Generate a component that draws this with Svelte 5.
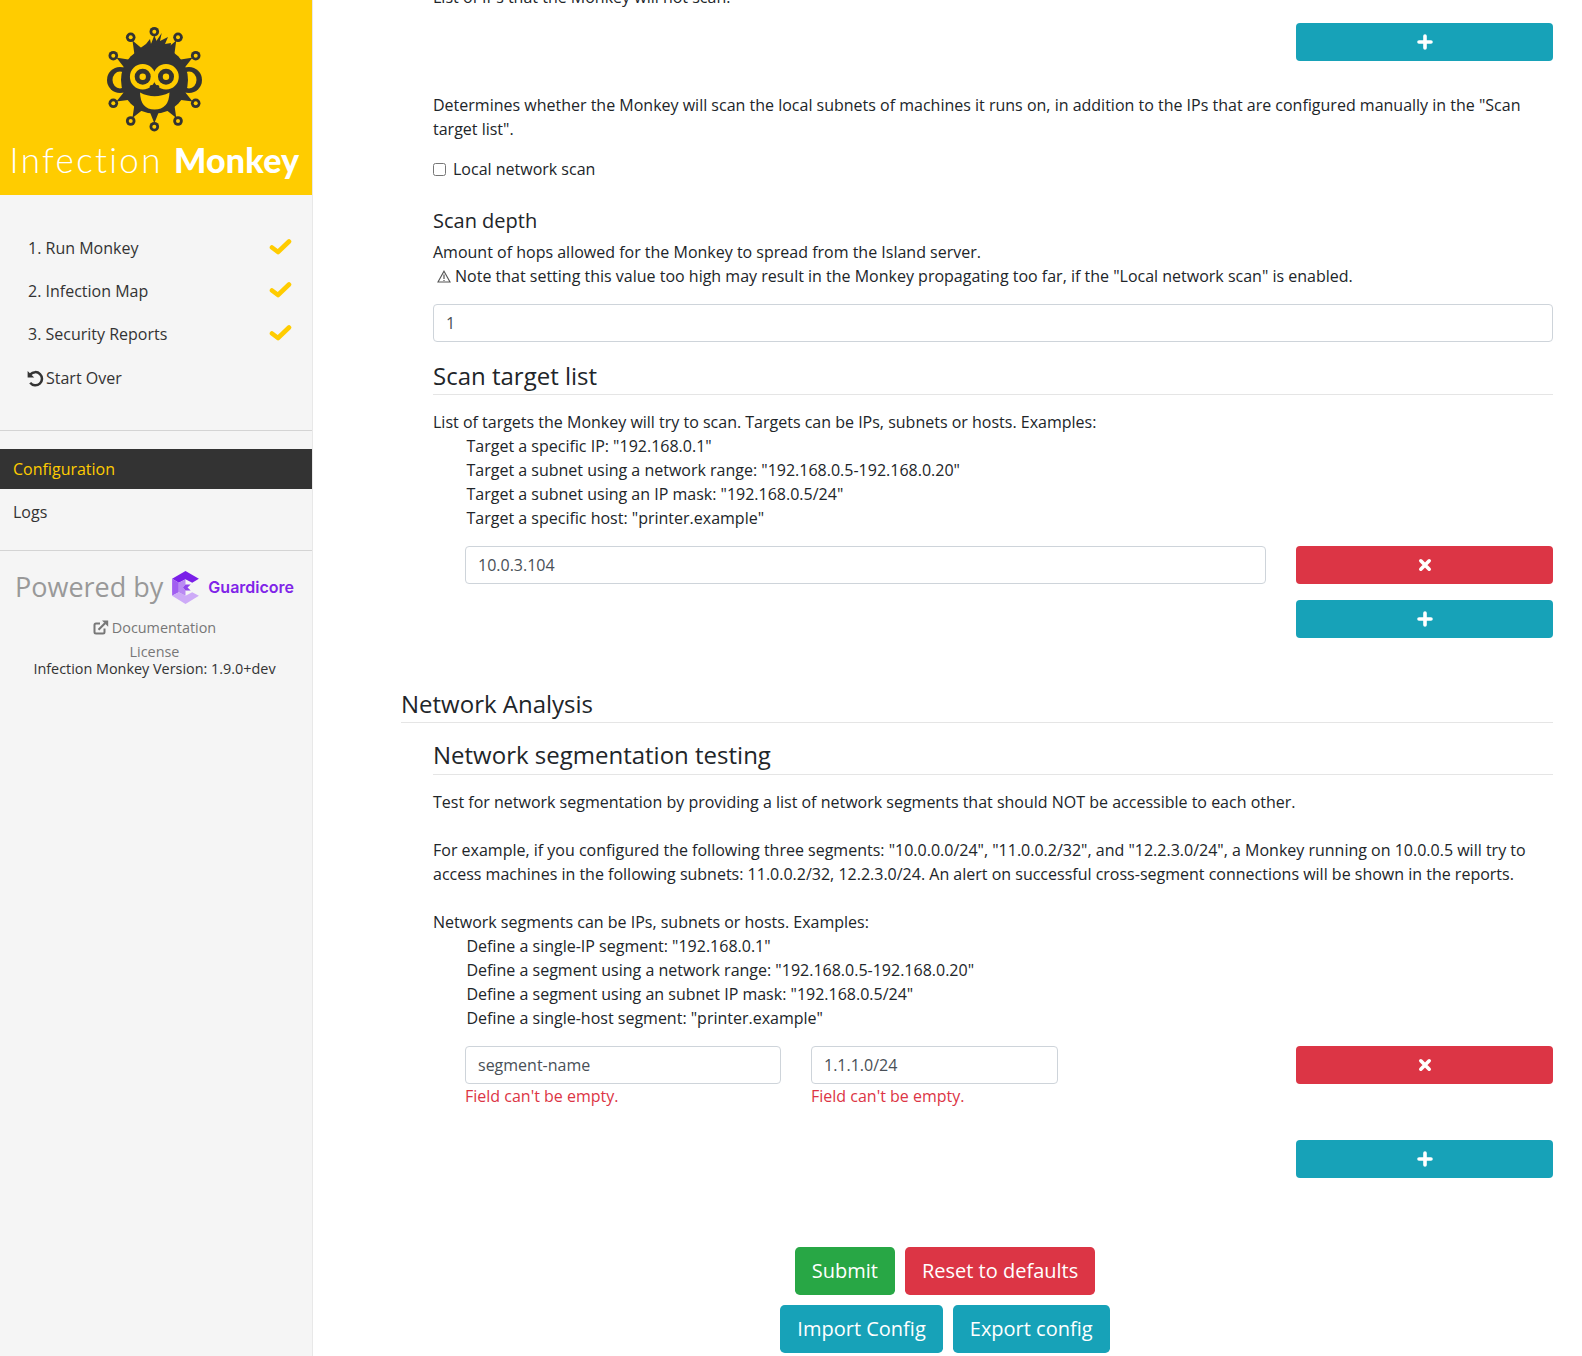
<script lang="ts">
	const steps = ['1. Run Monkey', '2. Infection Map', '3. Security Reports'];

	// end points of the virus spikes on the logo
	const spikes = [
		[154.3, 31.7], [130.7, 37.3], [178, 37.3], [113.3, 55.7], [195.7, 55.7],
		[113.3, 103.3], [195.7, 103.3], [130.7, 121], [178, 121], [154.3, 126.7]
	];
	const cx = 154.5;
	const cy = 80;

	function taper(x: number, y: number) {
		const dx = x - cx;
		const dy = y - cy;
		const len = Math.hypot(dx, dy);
		const nx = -dy / len;
		const ny = dx / len;
		const bx = cx + dx * 0.66;
		const by = cy + dy * 0.66;
		const w = 5;
		return `${bx + nx * w},${by + ny * w} ${x - nx * 1.4},${y - ny * 1.4} ${x + nx * 1.4},${y + ny * 1.4} ${bx - nx * w},${by - ny * w}`;
	}

	const targetExamples = [
		'Target a specific IP: "192.168.0.1"',
		'Target a subnet using a network range: "192.168.0.5-192.168.0.20"',
		'Target a subnet using an IP mask: "192.168.0.5/24"',
		'Target a specific host: "printer.example"'
	];
	const segmentExamples = [
		'Define a single-IP segment: "192.168.0.1"',
		'Define a segment using a network range: "192.168.0.5-192.168.0.20"',
		'Define a segment using an subnet IP mask: "192.168.0.5/24"',
		'Define a single-host segment: "printer.example"'
	];
</script>

{#snippet plus()}
	<svg class="glyph" width="16" height="16" viewBox="0 0 16 16"><path d="M8 2v12M2 8h12" stroke="#fff" stroke-width="3.6" stroke-linecap="round" /></svg>
{/snippet}

{#snippet times()}
	<svg class="glyph" width="16" height="16" viewBox="0 0 16 16"><path d="M3.8 3.8l8.4 8.4M12.2 3.8l-8.4 8.4" stroke="#fff" stroke-width="3.6" stroke-linecap="round" /></svg>
{/snippet}

<div class="app">
	<aside>
		<div class="logo">
			<svg class="monkey" width="110" height="120" viewBox="100 20 110 120">
				{#each spikes as s}
					<polygon points={taper(s[0], s[1])} fill="#333" />
					<circle cx={s[0]} cy={s[1]} r="4.8" fill="#333" />
					<circle cx={s[0]} cy={s[1]} r="2" fill="#fc0" />
				{/each}
				<circle cx="120" cy="80" r="13" fill="#333" />
				<circle cx="189" cy="80" r="13" fill="#333" />
				<ellipse cx="120" cy="80" rx="7.5" ry="8.5" fill="#fc0" />
				<ellipse cx="189" cy="80" rx="7.5" ry="8.5" fill="#fc0" />
				<polygon points="139,49 146,44 150,39 151,44 155,43 161.7,33 160,41 168,37 165,44 171,43 170,52" fill="#333" />
				<circle cx="154.5" cy="80" r="33.5" fill="#333" />
				<circle cx="142.7" cy="76.7" r="12.8" fill="#fc0" />
				<circle cx="166" cy="76.7" r="12.8" fill="#fc0" />
				<circle cx="142.7" cy="76.7" r="8" fill="#333" />
				<circle cx="166" cy="76.7" r="8" fill="#333" />
				<circle cx="142.7" cy="76.7" r="3.2" fill="#fc0" />
				<circle cx="166" cy="76.7" r="3.2" fill="#fc0" />
				<circle cx="151.7" cy="87" r="2.1" fill="#333" />
				<circle cx="157.3" cy="87" r="2.1" fill="#333" />
				<path d="M140 92.5Q154.5 100 169.5 92.5Q169 109.5 154.5 109.5Q140.5 109.5 140 92.5Z" fill="#fc0" />
			</svg>
			<div class="wordmark"><span class="thin">Infection</span> <span class="heavy">Monkey</span></div>
		</div>

		<ul class="steps">
			{#each steps as step}
				<li>
					<span>{step}</span>
					<svg width="24" height="18" viewBox="0 0 24 18"><polyline points="4,8.5 10,13 21,2.5" fill="none" stroke="#fc0" stroke-width="4.6" stroke-linejoin="round" stroke-linecap="round" /></svg>
				</li>
			{/each}
			<li class="over">
				<svg width="17" height="17" viewBox="0 0 17 17">
					<path d="M3.4 4.4A6.6 6.6 0 1 1 3.2 12.8" fill="none" stroke="#333" stroke-width="2.5" />
					<path d="M.6 1V7.6H7.2Z" fill="#333" />
				</svg>
				<span>Start Over</span>
			</li>
		</ul>

		<hr class="rule" />
		<div class="item active">Configuration</div>
		<div class="item">Logs</div>
		<hr class="rule second" />

		<div class="powered">
			<span class="by">Powered by</span>
			<svg width="29" height="33" viewBox="0 0 28 32">
				<polygon points="14,0 27,7.5 20.5,11.5 14,8 7.5,11.5 1,7.5" fill="#7a1fe8" />
				<polygon points="1,7.5 7.5,11.5 7.5,20.5 1,24" fill="#a15ff0" />
				<polygon points="1,24 7.5,20.5 14,24 20.5,20.5 27,24 14,32" fill="#cdaaf7" />
				<polygon points="7.5,11.5 14,8 14,13 11.5,16 14,19 14,24 7.5,20.5" fill="#b98af3" />
				<polygon points="14,13 19,13 16,16 19,19 14,19 11.5,16" fill="#8f45ec" />
			</svg>
			<span class="gc">Guardicore</span>
		</div>
		<div class="foot">
			<div class="doc">
				<svg width="16" height="15" viewBox="0 0 16 15">
					<path d="M11.5 8.5V12a1.5 1.5 0 0 1-1.5 1.5H3A1.5 1.5 0 0 1 1.5 12V5A1.5 1.5 0 0 1 3 3.5h4" fill="none" stroke="#777" stroke-width="2" />
					<path d="M5.5 9.8L12 3.3" stroke="#777" stroke-width="2.2" />
					<path d="M9 .6h6.2v6.2Z" fill="#777" />
				</svg>
				<span>Documentation</span>
			</div>
			<div class="license">License</div>
			<div class="version">Infection Monkey Version: 1.9.0+dev</div>
		</div>
	</aside>

	<main>
		<div class="form">
			<div class="group">
				<p>List of IPs that the Monkey will not scan.</p>
				<div class="add-row top"><button class="wide info">{@render plus()}</button></div>

				<p class="local">Determines whether the Monkey will scan the local subnets of machines it runs on, in addition to the IPs that are configured manually in the "Scan target list".</p>
				<label class="check"><input type="checkbox" /> <span>Local network scan</span></label>

				<h5>Scan depth</h5>
				<p>Amount of hops allowed for the Monkey to spread from the Island server.</p>
				<p class="note">
					<svg width="14" height="13" viewBox="0 0 14 13"><path d="M7 1.2L13 12H1Z" fill="none" stroke="#555" stroke-width="1.1" /><path d="M7 4.5V9M7 10v1" stroke="#555" stroke-width="1.2" /></svg>
					<span>Note that setting this value too high may result in the Monkey propagating too far, if the "Local network scan" is enabled.</span>
				</p>
				<input class="field depth" type="text" value="1" />

				<h4>Scan target list</h4>
				<p>List of targets the Monkey will try to scan. Targets can be IPs, subnets or hosts. Examples:</p>
				<div class="examples">
					{#each targetExamples as line}<div>{line}</div>{/each}
				</div>

				<div class="row">
					<div class="cells"><input class="field grow" type="text" value="10.0.3.104" /></div>
					<button class="wide danger">{@render times()}</button>
				</div>
				<div class="add-row gap16"><button class="wide info">{@render plus()}</button></div>
			</div>

			<h3>Network Analysis</h3>
			<div class="group">
				<h4 class="seg">Network segmentation testing</h4>
				<p>Test for network segmentation by providing a list of network segments that should NOT be accessible to each other.</p>
				<p class="spaced">For example, if you configured the following three segments: "10.0.0.0/24", "11.0.0.2/32", and "12.2.3.0/24", a Monkey running on 10.0.0.5 will try to access machines in the following subnets: 11.0.0.2/32, 12.2.3.0/24. An alert on successful cross-segment connections will be shown in the reports.</p>
				<p class="spaced">Network segments can be IPs, subnets or hosts. Examples:</p>
				<div class="examples">
					{#each segmentExamples as line}<div>{line}</div>{/each}
				</div>

				<div class="row">
					<div class="cells">
						<div class="cell first">
							<input class="field" type="text" value="segment-name" />
							<div class="error">Field can't be empty.</div>
						</div>
						<div class="cell second-cell">
							<input class="field" type="text" value="1.1.1.0/24" />
							<div class="error">Field can't be empty.</div>
						</div>
					</div>
					<button class="wide danger">{@render times()}</button>
				</div>
				<div class="add-row gap-seg"><button class="wide info">{@render plus()}</button></div>
			</div>
		</div>

		<div class="actions">
			<div><button class="lg success">Submit</button><button class="lg danger">Reset to defaults</button></div>
			<div><button class="lg info">Import Config</button><button class="lg info">Export config</button></div>
		</div>
	</main>
</div>

<style>
	:global(body) {
		margin: 0;
		background: #fff;
		overflow: hidden;
	}

	.app {
		display: flex;
		height: 1356px;
		overflow: hidden;
		font-family: "Open Sans", sans-serif;
		font-size: 16px;
		line-height: 24px;
		color: #212529;
	}

	aside {
		width: 313px;
		flex: none;
		box-sizing: border-box;
		background: #f5f5f5;
		border-right: 1px solid #e8e8e8;
	}

	.logo {
		height: 195px;
		background: #fc0;
		overflow: hidden;
		text-align: center;
	}

	.monkey {
		display: block;
		margin: 20px 0 0 100px;
	}

	.wordmark {
		margin-top: -3px;
		padding-right: 3px;
		font-family: Lato, sans-serif;
		font-size: 35px;
		line-height: 44px;
		color: #fff;
		white-space: nowrap;
		letter-spacing: 2.3px;
	}

	.thin {
		font-weight: 300;
	}

	.heavy {
		font-size: 34px;
		font-weight: 900;
		letter-spacing: 0.2px;
	}

	.steps {
		list-style: none;
		margin: 0;
		padding: 41px 20px 0 28px;
	}

	.steps li {
		display: flex;
		justify-content: space-between;
		align-items: center;
		height: 24px;
		margin-bottom: 19px;
		color: #333;
	}

	.steps li.over {
		justify-content: flex-start;
		margin-top: 20px;
	}

	.over svg {
		flex: none;
		margin: 0 2px 0 -1px;
	}

	.rule {
		margin: 40px 0 18px;
		border: 0;
		border-top: 1px solid #d4d4d4;
	}

	.rule.second {
		margin: 18px 0 0;
	}

	.item {
		height: 40px;
		padding: 0 13px;
		line-height: 40px;
		color: #333;
		margin-bottom: 3px;
	}

	.item.active {
		background: #333;
		color: #fc0;
	}

	.powered {
		display: flex;
		align-items: center;
		height: 34px;
		margin-top: 19px;
		padding-left: 15px;
	}

	.by {
		font-size: 27px;
		line-height: 34px;
		color: #999;
		margin-right: 8px;
		white-space: nowrap;
	}

	.gc {
		font-family: Inter, sans-serif;
		font-weight: 600;
		font-size: 16px;
		color: #8024e8;
		margin-left: 8px;
		white-space: nowrap;
	}

	.foot {
		text-align: center;
		font-size: 14.4px;
		line-height: 17px;
		color: #777;
		padding: 0 3px 0 0;
		margin-top: 14px;
	}

	.doc {
		display: flex;
		justify-content: center;
		align-items: center;
		gap: 3px;
		height: 18px;
	}

	.license {
		margin-top: 7px;
	}

	.version {
		color: #333;
	}

	main {
		flex: 1;
		min-width: 0;
		padding: 0 29px 0 24px;
	}

	.form {
		margin-top: -15px;
		padding-left: 64px;
	}

	.group {
		padding-left: 32px;
	}

	p {
		margin: 0;
	}

	.add-row {
		display: flex;
		justify-content: flex-end;
	}

	.add-row.top {
		margin-top: 14px;
	}

	.gap16 {
		margin-top: 16px;
	}

	.gap-seg {
		margin-top: 32px;
	}

	button {
		border: 1px solid transparent;
		border-radius: 4px;
		font-family: inherit;
		color: #fff;
		padding: 0;
	}

	.wide {
		display: flex;
		align-items: center;
		justify-content: center;
		flex: none;
		width: 257px;
		height: 38px;
	}

	.info {
		background: #17a2b8;
	}

	.danger {
		background: #dc3545;
	}

	.success {
		background: #28a745;
	}

	.glyph {
		display: block;
	}

	.local {
		margin-top: 32px;
	}

	.check {
		display: flex;
		align-items: center;
		gap: 7px;
		margin-top: 16px;
	}

	.check input {
		width: 13px;
		height: 13px;
		margin: 0;
	}

	h5 {
		margin: 28px 0 7px;
		font-size: 20px;
		font-weight: 400;
		line-height: 24px;
	}

	.note {
		display: flex;
		align-items: center;
		gap: 4px;
		padding-left: 4px;
	}

	.field {
		display: block;
		box-sizing: border-box;
		width: 100%;
		height: 38px;
		padding: 6px 12px;
		border: 1px solid #ced4da;
		border-radius: 4px;
		background: #fff;
		color: #495057;
		font-family: inherit;
		font-size: 16px;
		line-height: 24px;
	}

	.depth {
		margin-top: 16px;
	}

	h4 {
		margin: 19px 0 15px;
		padding-bottom: 4px;
		border-bottom: 1px solid #e5e5e5;
		font-size: 24px;
		font-weight: 400;
		line-height: 29px;
	}

	h4.seg {
		margin-top: 17px;
		padding-bottom: 5px;
	}

	h3 {
		margin: 51px 0 0;
		padding-bottom: 4px;
		border-bottom: 1px solid #e5e5e5;
		font-size: 24px;
		font-weight: 400;
		line-height: 29px;
	}

	.examples {
		padding-left: 33.5px;
	}

	.spaced {
		margin-top: 24px;
	}

	.row {
		display: flex;
		justify-content: space-between;
		margin-top: 16px;
	}

	.cells {
		display: flex;
		padding-left: 32px;
		width: 801px;
	}

	.grow {
		flex: 1;
	}

	.first {
		width: 316px;
		margin-right: 30px;
	}

	.second-cell {
		width: 247px;
	}

	.error {
		color: #dc3545;
		line-height: 24px;
	}

	.actions {
		margin-top: 69px;
		text-align: center;
	}

	.actions div {
		display: flex;
		justify-content: center;
		gap: 10px;
		margin-bottom: 10px;
	}

	.lg {
		height: 48px;
		padding: 0 16px;
		font-size: 20px;
		line-height: 30px;
		border-radius: 4.8px;
	}
</style>
